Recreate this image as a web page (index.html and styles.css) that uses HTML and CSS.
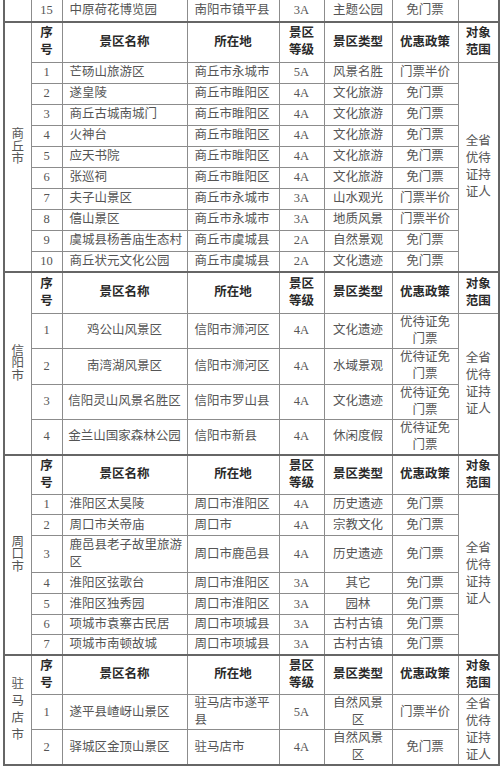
FILE: index.html
```html
<!DOCTYPE html>
<html lang="zh-CN">
<head>
<meta charset="utf-8">
<title>景区优惠政策表</title>
<link rel="stylesheet" href="styles.css">
</head>
<body>
<table class="sheet">
  <colgroup>
    <col class="c-region"><col class="c-no"><col class="c-name"><col class="c-loc">
    <col class="c-lvl"><col class="c-type"><col class="c-pol"><col class="c-scope">
  </colgroup>
  <tbody>
    <tr class="first h22">
      <td></td><td>15</td><td class="l">中原荷花博览园</td><td class="l">南阳市镇平县</td><td>3A</td><td>主题公园</td><td>免门票</td><td></td>
    </tr>

    <!-- 商丘市 -->
    <tr class="sec hd h40">
      <td rowspan="11" class="region"><span>商<br>丘<br>市</span></td>
      <td>序<br>号</td><td>景区名称</td><td>所在地</td><td>景区<br>等级</td><td>景区类型</td><td>优惠政策</td><td>对象<br>范围</td>
    </tr>
    <tr class="h21"><td>1</td><td class="l">芒砀山旅游区</td><td class="l">商丘市永城市</td><td>5A</td><td>风景名胜</td><td>门票半价</td>
      <td rowspan="10" class="scope">全省<br>优待<br>证持<br>证人</td></tr>
    <tr class="h21"><td>2</td><td class="l">遂皇陵</td><td class="l">商丘市睢阳区</td><td>4A</td><td>文化旅游</td><td>免门票</td></tr>
    <tr class="h21"><td>3</td><td class="l">商丘古城南城门</td><td class="l">商丘市睢阳区</td><td>4A</td><td>文化旅游</td><td>免门票</td></tr>
    <tr class="h21"><td>4</td><td class="l">火神台</td><td class="l">商丘市睢阳区</td><td>4A</td><td>文化旅游</td><td>免门票</td></tr>
    <tr class="h21"><td>5</td><td class="l">应天书院</td><td class="l">商丘市睢阳区</td><td>4A</td><td>文化旅游</td><td>免门票</td></tr>
    <tr class="h21"><td>6</td><td class="l">张巡祠</td><td class="l">商丘市睢阳区</td><td>4A</td><td>文化旅游</td><td>免门票</td></tr>
    <tr class="h21"><td>7</td><td class="l">夫子山景区</td><td class="l">商丘市永城市</td><td>3A</td><td>山水观光</td><td>门票半价</td></tr>
    <tr class="h21"><td>8</td><td class="l">僖山景区</td><td class="l">商丘市永城市</td><td>3A</td><td>地质风景</td><td>门票半价</td></tr>
    <tr class="h21"><td>9</td><td class="l">虞城县杨善庙生态村</td><td class="l">商丘市虞城县</td><td>2A</td><td>自然景观</td><td>免门票</td></tr>
    <tr class="h21"><td>10</td><td class="l">商丘状元文化公园</td><td class="l">商丘市虞城县</td><td>2A</td><td>文化遗迹</td><td>免门票</td></tr>

    <!-- 信阳市 -->
    <tr class="sec hd h41">
      <td rowspan="5" class="region"><span>信<br>阳<br>市</span></td>
      <td>序<br>号</td><td>景区名称</td><td>所在地</td><td>景区<br>等级</td><td>景区类型</td><td>优惠政策</td><td>对象<br>范围</td>
    </tr>
    <tr class="h35"><td>1</td><td>鸡公山风景区</td><td class="l">信阳市浉河区</td><td>4A</td><td>文化遗迹</td><td>优待证免<br>门票</td>
      <td rowspan="4" class="scope">全省<br>优待<br>证持<br>证人</td></tr>
    <tr class="h36"><td>2</td><td>南湾湖风景区</td><td class="l">信阳市浉河区</td><td>4A</td><td>水域景观</td><td>优待证免<br>门票</td></tr>
    <tr class="h35"><td>3</td><td>信阳灵山风景名胜区</td><td class="l">信阳市罗山县</td><td>4A</td><td>文化遗迹</td><td>优待证免<br>门票</td></tr>
    <tr class="h33"><td>4</td><td>金兰山国家森林公园</td><td class="l">信阳市新县</td><td>4A</td><td>休闲度假</td><td>优待证免<br>门票</td></tr>

    <!-- 周口市 -->
    <tr class="sec hd h40">
      <td rowspan="8" class="region"><span>周<br>口<br>市</span></td>
      <td>序<br>号</td><td>景区名称</td><td>所在地</td><td>景区<br>等级</td><td>景区类型</td><td>优惠政策</td><td>对象<br>范围</td>
    </tr>
    <tr class="h20"><td>1</td><td class="l">淮阳区太昊陵</td><td class="l">周口市淮阳区</td><td>4A</td><td>历史遗迹</td><td>免门票</td>
      <td rowspan="7" class="scope">全省<br>优待<br>证持<br>证人</td></tr>
    <tr class="h21"><td>2</td><td class="l">周口市关帝庙</td><td class="l">周口市</td><td>4A</td><td>宗教文化</td><td>免门票</td></tr>
    <tr class="h37"><td>3</td><td class="l">鹿邑县老子故里旅游<br>区</td><td class="l">周口市鹿邑县</td><td>4A</td><td>历史遗迹</td><td>免门票</td></tr>
    <tr class="h21"><td>4</td><td class="l">淮阳区弦歌台</td><td class="l">周口市淮阳区</td><td>3A</td><td>其它</td><td>免门票</td></tr>
    <tr class="h21"><td>5</td><td class="l">淮阳区独秀园</td><td class="l">周口市淮阳区</td><td>3A</td><td>园林</td><td>免门票</td></tr>
    <tr class="h20"><td>6</td><td class="l">项城市袁寨古民居</td><td class="l">周口市项城县</td><td>3A</td><td>古村古镇</td><td>免门票</td></tr>
    <tr class="h20"><td>7</td><td class="l">项城市南顿故城</td><td class="l">周口市项城县</td><td>3A</td><td>古村古镇</td><td>免门票</td></tr>

    <!-- 驻马店市 -->
    <tr class="sec hd h40">
      <td rowspan="3" class="region wide"><span>驻<br>马<br>店<br>市</span></td>
      <td>序<br>号</td><td>景区名称</td><td>所在地</td><td>景区<br>等级</td><td>景区类型</td><td>优惠政策</td><td>对象<br>范围</td>
    </tr>
    <tr class="h35"><td>1</td><td class="l">遂平县嵖岈山景区</td><td class="l">驻马店市遂平<br>县</td><td>5A</td><td>自然风景<br>区</td><td>门票半价</td>
      <td rowspan="2" class="scope">全省<br>优待<br>证持<br>证人</td></tr>
    <tr class="h34"><td>2</td><td class="l">驿城区金顶山景区</td><td class="l">驻马店市</td><td>4A</td><td>自然风景<br>区</td><td>免门票</td></tr>
  </tbody>
</table>
</body>
</html>
```

FILE: styles.css
```css
html, body {
  margin: 0;
  padding: 0;
  background: #ffffff;
}

.sheet {
  border-collapse: collapse;
  table-layout: fixed;
  width: 495px;
  margin-left: 3px;
  font-family: "Liberation Serif", "Noto Sans CJK SC", serif;
  font-size: 12.5px;
  color: #555555;
  border-left: 2px solid #666666;
  border-right: 2px solid #666666;
  border-bottom: 2px solid #666666;
}

.c-region { width: 27px; }
.c-no { width: 31px; }
.c-name { width: 125px; }
.c-loc { width: 92px; }
.c-lvl { width: 45px; }
.c-type { width: 68px; }
.c-pol { width: 66px; }
.c-scope { width: 41px; }

.sheet td {
  border: 1px solid #8c8c8c;
  padding: 0;
  text-align: center;
  vertical-align: middle;
  line-height: 17px;
  overflow: hidden;
  white-space: nowrap;
}

.sheet td.l {
  text-align: left;
  padding-left: 7px;
}

.first td {
  border-top: none;
}

.sec td {
  border-top: 2px solid #666666;
}

.hd td {
  font-weight: bold;
  color: #2a2a2a;
}

.sheet td.region {
  font-weight: normal;
  color: #555555;
  line-height: 12.5px;
}

.sheet td.region.wide {
  line-height: 17px;
}

.scope {
  line-height: 17.5px;
}

.h20 { height: 20px; }
.h21 { height: 21px; }
.h22 { height: 22px; }
.h33 { height: 33px; }
.h34 { height: 34px; }
.h35 { height: 35px; }
.h36 { height: 36px; }
.h37 { height: 37px; }
.h40 { height: 40px; }
.h41 { height: 41px; }
```
